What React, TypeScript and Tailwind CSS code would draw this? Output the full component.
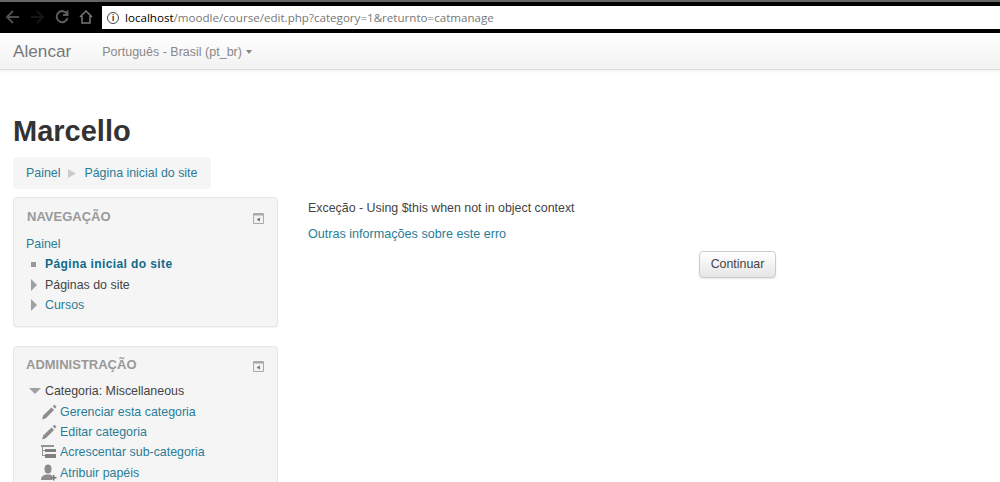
const F = { fontFamily: '"Liberation Sans", Arial, sans-serif' };

function Pencil() {
  return (
    <svg width="16" height="16" viewBox="0 0 16 16" className="shrink-0">
      <path d="M1 15.500l1.200-4L10.500 3.500l2.500 2.500L4.800 14.200z" fill="#8c8c8c" />
      <path d="M11.700 2.300l1.800-1.600 2 2-1.600 1.800z" fill="#8c8c8c" />
    </svg>
  );
}
function Tree() {
  return (
    <svg width="15" height="15" viewBox="0 0 15 15" className="shrink-0">
      <path d="M0 0h13v2H0zM1 2h1v9H1zM2 5h2v1H2zM2 10h2v1H2z" fill="#939393" />
      <path d="M4 4h11v3H4zM4 9h11v4H4z" fill="#808080" />
    </svg>
  );
}
function UserPlus() {
  return (
    <svg width="16" height="17" viewBox="0 0 16 17" className="shrink-0">
      <ellipse cx="7" cy="5" rx="3.500" ry="4.500" fill="#8c8c8c" />
      <path d="M0 16c0-4 3-5.500 7-5.500 2 0 3.500.4 4.500 1.200V16z" fill="#8c8c8c" />
      <path d="M12 11h1.500v2H15.500v1.500H13.500v2H12v-2h-2V13h2z" fill="#777" />
    </svg>
  );
}
function Collapse() {
  return (
    <svg width="11" height="11" viewBox="0 0 11 11" className="shrink-0">
      <path d="M.5.5h10v10H.5z" fill="#f2f2f2" stroke="#aaa" />
      <path d="M1 1h9v1.500H1z" fill="#aaa" />
      <path d="M6.800 4.500v4L3.800 6.500z" fill="#666" />
    </svg>
  );
}
function TriRight() {
  return (
    <svg width="8" height="12" viewBox="0 0 8 12">
      <path d="M1 0l6 6-6 6z" fill="#a0a0a0" />
    </svg>
  );
}

export default function App() {
  return (
    <div className="w-[1000px] h-[482px] overflow-hidden bg-white text-[12.4px] text-[#444]" style={F}>
      <div className="h-[33px] bg-black flex items-start relative">
        <div className="absolute left-0 top-0 w-full h-[2px] bg-[#666]" />
        <div className="flex items-center gap-[10px] pl-[5px] pt-[9px] w-[102px]">
          <svg width="15" height="16" viewBox="0 0 15 16" fill="none" stroke="#4d4d4d" strokeWidth="2"><path d="M14 8H2M8 2L2 8l6 6" /></svg>
          <svg width="15" height="16" viewBox="0 0 15 16" fill="none" stroke="#161616" strokeWidth="2"><path d="M1 8h12M7 2l6 6-6 6" /></svg>
          <svg width="14" height="16" viewBox="0 0 14 16" fill="none" stroke="#5c5c5c" strokeWidth="2"><path d="M12 5a5.500 5.500 0 1 0 .5 4M12.500 1.500V6H8" /></svg>
          <svg width="14" height="16" viewBox="0 0 14 16" fill="none" stroke="#777" strokeWidth="1.500"><path d="M1 8l6-6 6 6M3 7v7h8V7" /></svg>
        </div>
        <div className="mt-[6px] w-[898px] h-[23px] bg-white flex items-center pl-[5px] text-[11.6px]" style={{ fontFamily: '"Open Sans", sans-serif' }}>
          <span className="w-[12px] h-[12px] rounded-full border border-[#444] text-[9px] leading-[10px] text-center mr-[6px] font-bold">i</span>
          <span className="text-black">localhost</span>
          <span className="text-[#777]">/moodle/course/edit.php?category=1&amp;returnto=catmanage</span>
        </div>
      </div>
      <div className="h-[37px] border-b border-[#dcdcdc] bg-gradient-to-b from-white to-[#f2f2f2] flex items-center shadow-[0_1px_3px_rgba(0,0,0,0.08)]">
        <span className="ml-[13px] text-[17.200px] text-[#777] pt-[2px]">Alencar</span>
        <span className="ml-[31px] text-[12.500px] text-[#888] pt-[2px]">Português - Brasil (pt_br)</span>
        <span className="ml-[4px] mt-[2px] border-x-[3.500px] border-x-transparent border-t-[4px] border-t-[#888]" />
      </div>
      <div className="pl-[13px] pt-[43px]">
        <h1 className="text-[29px] leading-[36px] font-bold text-[#333]">Marcello</h1>
        <div className="mt-[8px] inline-flex items-center h-[32px] pl-[13px] pr-[14px] rounded bg-[#f5f5f5] text-[#2a7d96]">
          <span>Painel</span>
          <span className="mx-[8px] w-[8px] flex"><svg width="8" height="9" viewBox="0 0 8 9"><path d="M0 0l8 4.500-8 4.500z" fill="#ccc" /></svg></span>
          <span>Página inicial do site</span>
        </div>
        <div className="flex mt-[8px]">
          <div className="w-[265px] shrink-0 flex flex-col gap-[19px]">
            <div className="h-[130px] bg-[#f5f5f5] border border-[#e6e6e6] rounded pl-[13px] pr-[13px] pt-[10px] shadow-[0_1px_1px_rgba(0,0,0,0.05)]">
              <div className="flex items-center justify-between h-[17px]">
                <span className="text-[13px] font-bold text-[#999]">NAVEGAÇÃO</span>
                <span className="mt-[4px]"><Collapse /></span>
              </div>
              <div className="mt-[9px] leading-[20.300px]">
                <div className="text-[#2a7d96] -ml-[1px]">Painel</div>
                <div className="flex items-center">
                  <span className="w-[18px] pl-[4px]"><span className="block w-[5px] h-[5px] bg-[#999]" /></span>
                  <span className="font-bold text-[12px] text-[#0f6a8a] tracking-[0.4px]">Página inicial do site</span>
                </div>
                <div className="flex items-center"><span className="w-[18px] pl-[3px]"><TriRight /></span><span>Páginas do site</span></div>
                <div className="flex items-center text-[#2a7d96]"><span className="w-[18px] pl-[3px]"><TriRight /></span><span>Cursos</span></div>
              </div>
            </div>
            <div className="h-[200px] bg-[#f5f5f5] border border-[#e6e6e6] rounded pl-[12px] pr-[13px] pt-[9px]">
              <div className="flex items-center justify-between h-[17px]">
                <span className="text-[13px] font-bold text-[#999]">ADMINISTRAÇÃO</span>
                <span className="mt-[4px]"><Collapse /></span>
              </div>
              <div className="mt-[8px] leading-[20.300px]">
                <div className="flex items-center mb-[0.500px]">
                  <span className="w-[19px] pl-[3px]"><span className="block w-0 h-0 border-x-[6px] border-x-transparent border-t-[6px] border-t-[#a0a0a0]" /></span>
                  <span>Categoria: Miscellaneous</span>
                </div>
                {[
                  [<Pencil key="a" />, "Gerenciar esta categoria"],
                  [<Pencil key="b" />, "Editar categoria"],
                  [<Tree key="c" />, "Acrescentar sub-categoria"],
                  [<UserPlus key="d" />, "Atribuir papéis"],
                ].map(([icon, label], i) => (
                  <div key={i} className="flex items-center pl-[15px] h-[20.300px] gap-[3px] text-[#2a7d96]">
                    <span className="w-[16px] shrink-0 flex">{icon}</span>
                    <span>{label}</span>
                  </div>
                ))}
              </div>
            </div>
          </div>
          <div className="ml-[30px] w-[468px] pt-[2px] flex flex-col">
            <div className="leading-[18px]">Exceção - Using $this when not in object context</div>
            <div className="mt-[8px] leading-[18px] text-[12.600px] text-[#2a7d96]">Outras informações sobre este erro</div>
            <div className="mt-[8px] self-end">
              <button className="w-[77px] h-[27px] border border-[#ccc] rounded bg-gradient-to-b from-white to-[#e6e6e6] text-[12.400px] text-[#444] shadow-[0_1px_2px_rgba(0,0,0,0.1)]">Continuar</button>
            </div>
          </div>
        </div>
      </div>
    </div>
  );
}
